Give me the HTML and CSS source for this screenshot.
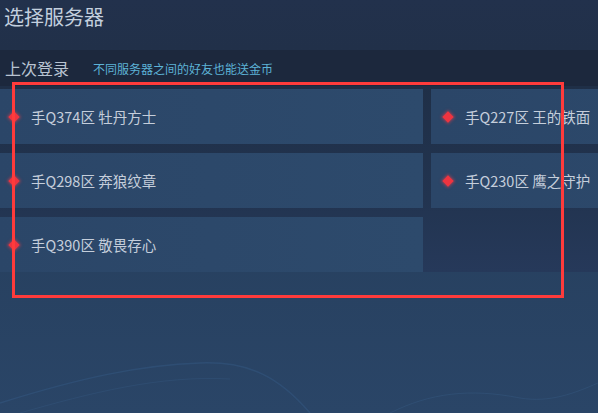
FILE: index.html
```html
<!DOCTYPE html>
<html lang="zh">
<head>
<meta charset="utf-8">
<link rel="stylesheet" href="styles.css">
</head>
<body>
<div class="page">
  <header class="title">选择服务器</header>
  <div class="tabbar">
    <span class="tab">上次登录</span>
    <span class="hint">不同服务器之间的好友也能送金币</span>
  </div>
  <div class="grid">
    <div class="card"><i class="dot"></i><span class="name">手Q374区 牡丹方士</span></div>
    <div class="card"><i class="dot"></i><span class="name">手Q227区 王的铁面</span></div>
    <div class="card"><i class="dot"></i><span class="name">手Q298区 奔狼纹章</span></div>
    <div class="card"><i class="dot"></i><span class="name">手Q230区 鹰之守护</span></div>
    <div class="card"><i class="dot"></i><span class="name">手Q390区 敬畏存心</span></div>
  </div>
  <svg class="deco" width="598" height="130" viewBox="0 0 598 130">
    <path d="M0 120 C80 95 140 82 200 80 C250 78 280 95 310 130" stroke="#3a6290" stroke-opacity="0.35" stroke-width="1.5" fill="none"/>
    <path d="M20 130 C90 110 160 92 230 96" stroke="#3a6290" stroke-opacity="0.25" stroke-width="1" fill="none"/>
    <path d="M390 130 C430 110 470 105 520 115 C550 120 575 110 598 100" stroke="#3a6290" stroke-opacity="0.3" stroke-width="1" fill="none"/>
  </svg>
  <div class="highlight"></div>
</div>
</body>
</html>
```

FILE: styles.css
```css
html, body {
  margin: 0;
  padding: 0;
}
body {
  width: 598px;
  height: 413px;
  overflow: hidden;
  font-family: "Noto Sans CJK SC", "Noto Sans", sans-serif;
}
.page {
  position: relative;
  width: 598px;
  height: 413px;
  overflow: hidden;
  background: linear-gradient(180deg, #243a58 0%, #27405f 55%, #2a4567 100%);
}
.title {
  height: 50px;
  box-sizing: border-box;
  padding: 3px 0 0 4px;
  font-size: 20px;
  line-height: 28px;
  color: #c3cfde;
  background: linear-gradient(180deg, #22314c 0%, #213049 100%);
}
.tabbar {
  height: 36px;
  display: flex;
  align-items: center;
  padding-left: 5px;
  gap: 24px;
  background: #1c283d;
}
.tab {
  font-size: 16px;
  color: #b9c4d2;
}
.hint {
  font-size: 12px;
  color: #5db3d7;
  margin-top: 1px;
}
.grid {
  display: grid;
  grid-template-columns: 426px 426px;
  column-gap: 8px;
  row-gap: 9px;
  margin-left: -3px;
  padding: 3px 0 0;
  background: linear-gradient(180deg, #1f2f47 0%, #223450 60%, #26395a 100%);
}
.card {
  height: 55px;
  display: flex;
  align-items: center;
  background: linear-gradient(90deg, #2b4668 0%, #2d4a6c 100%);
}
.dot {
  width: 8px;
  height: 8px;
  margin-left: 13px;
  background: #ee3440;
  transform: rotate(45deg);
  box-shadow: 0 0 3px 1px rgba(240, 60, 70, 0.55);
  flex: none;
}
.name {
  margin-left: 13px;
  font-size: 14.5px;
  color: #c5cedb;
  white-space: nowrap;
}
.deco {
  position: absolute;
  left: 0;
  bottom: 0;
}
.highlight {
  position: absolute;
  left: 12px;
  top: 82px;
  width: 552px;
  height: 216px;
  box-sizing: border-box;
  border: 3px solid #ff3b3b;
}
```
